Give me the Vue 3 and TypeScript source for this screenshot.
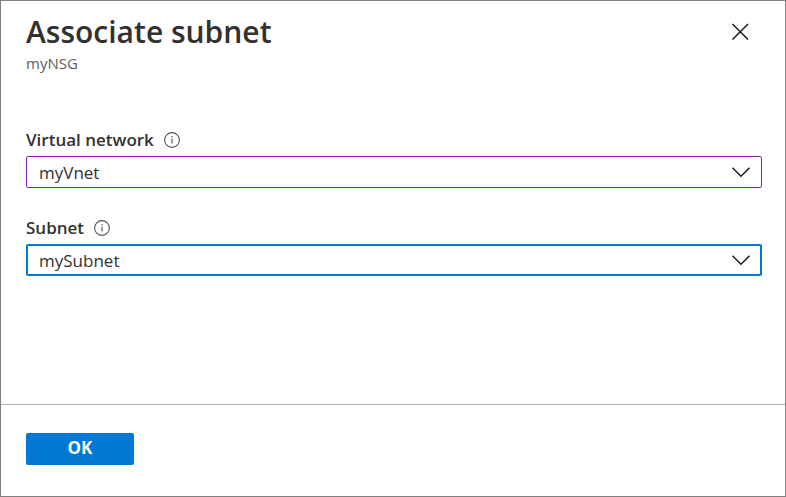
<script setup lang="ts">
import { reactive } from 'vue'

interface Field {
  id: string
  label: string
  value: string
  options: string[]
  active: boolean
}

const fields = reactive<Field[]>([
  { id: 'virtual-network', label: 'Virtual network', value: 'myVnet', options: ['myVnet'], active: false },
  { id: 'subnet', label: 'Subnet', value: 'mySubnet', options: ['mySubnet'], active: true },
])
</script>

<template>
  <form class="panel" @submit.prevent>
    <header class="header">
      <div>
        <h1 class="title">Associate subnet</h1>
        <p class="subtitle">myNSG</p>
      </div>
      <button class="close" type="button" aria-label="Close">
        <svg width="18" height="18" viewBox="0 0 18 18" aria-hidden="true">
          <path d="M1.5 1L17 16.5M17 1L1.5 16.5" fill="none" stroke="#1b1a19" stroke-width="1.5" />
        </svg>
      </button>
    </header>

    <main class="body">
      <div v-for="field in fields" :key="field.id" class="field">
        <div class="label-row">
          <label class="label" :for="field.id">{{ field.label }}</label>
          <svg class="info" width="16" height="16" viewBox="0 0 16 16" aria-hidden="true">
            <circle cx="8" cy="8" r="7.4" fill="none" stroke="#55534f" stroke-width="1.1" />
            <path d="M8 6.5V11.5M8 4V5.3" fill="none" stroke="#6b6967" stroke-width="1.3" />
          </svg>
        </div>
        <div class="picker">
          <select :id="field.id" v-model="field.value" class="select" :class="{ active: field.active }">
            <option v-for="option in field.options" :key="option">{{ option }}</option>
          </select>
          <svg class="chevron" width="20" height="12" viewBox="0 0 20 12" aria-hidden="true">
            <path d="M1.5 1.8L10 10.2L18.5 1.8" fill="none" stroke="#1b1a19" stroke-width="1.5" />
          </svg>
        </div>
      </div>
    </main>

    <footer class="footer">
      <button class="ok" type="submit">OK</button>
    </footer>
  </form>
</template>

<style>
body {
  background: #fff;
}
</style>

<style scoped>
.panel {
  box-sizing: border-box;
  display: flex;
  flex-direction: column;
  min-height: 100vh;
  border: 1px solid #808080;
  background: #fff;
  color: #323130;
  font-family: "Open Sans", "Noto Sans", sans-serif;
  font-size: 16px;
}

.header {
  display: flex;
  justify-content: space-between;
  align-items: flex-start;
  padding: 11px 36px 0 25px;
}

.title {
  margin: 0;
  font-size: 30px;
  font-weight: 600;
  line-height: 40px;
}

.subtitle {
  margin: 0;
  color: #605e5c;
  font-size: 15px;
  line-height: 22px;
}

.close {
  display: flex;
  margin-top: 11px;
  padding: 0;
  border: 0;
  background: none;
}

.body {
  display: flex;
  flex: 1;
  flex-direction: column;
  gap: 30px;
  padding: 56px 23px 32px 25px;
}

.field {
  display: flex;
  flex-direction: column;
  gap: 6px;
}

.label-row {
  display: flex;
  align-items: center;
  gap: 10px;
}

.label {
  font-size: 17px;
  font-weight: 600;
  line-height: 20px;
}

.picker {
  display: grid;
  align-items: center;
}

.select {
  grid-area: 1 / 1;
  box-sizing: border-box;
  width: 100%;
  height: 32px;
  padding: 0 40px 0 12px;
  border: 1px solid #881fa3;
  border-radius: 2px;
  outline: none;
  appearance: none;
  background: #fff;
  color: #323130;
  font-family: inherit;
  font-size: 17px;
}

.select.active {
  padding-left: 11px;
  border: 2px solid #0078d4;
}

.chevron {
  grid-area: 1 / 1;
  justify-self: end;
  margin-right: 11px;
  pointer-events: none;
}

.footer {
  padding: 28px 25px 31px;
  border-top: 1px solid #b3b0ad;
}

.ok {
  display: block;
  width: 108px;
  height: 32px;
  padding: 0 0 2px;
  border: 0;
  border-radius: 2px;
  background: #0078d4;
  color: #fff;
  font-family: inherit;
  font-size: 17px;
  font-weight: 700;
  line-height: 30px;
}
</style>
